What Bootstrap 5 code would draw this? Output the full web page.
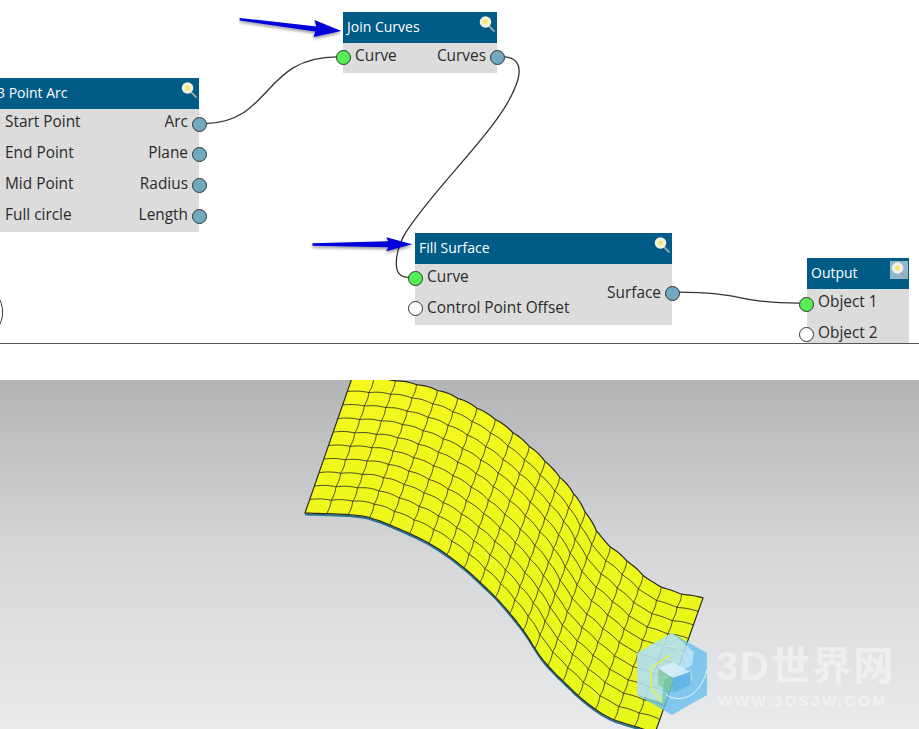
<!DOCTYPE html>
<html lang="en">
<head>
  <meta charset="UTF-8" />
  <meta name="viewport" content="width=device-width, initial-scale=1.0"/>
  <title>Fill Surface</title>
  <link href="https://cdn.jsdelivr.net/npm/bootstrap@5.3.3/dist/css/bootstrap.min.css" rel="stylesheet" />
  <style>
    html, body { height: 729px; overflow: hidden; background: #fff; }
    .graph-panel { height: 344px; border-bottom: 1px solid #555; overflow: hidden; }
    .gap-strip { height: 36px; }
    .view-panel { height: 349px; overflow: hidden; background: linear-gradient(#b3b4b5, #d6d7d9 50%, #e9eaeb); }
    .layer { position: absolute; top: 0; left: 0; width: 100%; height: 100%; }
    .flow-node { position: absolute; background: #dcdcdc; font-family: "Open Sans", "Noto Sans", sans-serif; font-size: 15.4px; color: #2b2b2b; }
    .node-head { height: 30.5px; padding: 0 0 2px 4px; background: #005c86; color: #fff; font-size: 14px; }
    .node-row { position: relative; height: 30.7px; padding: 0 11px 0 12px; white-space: nowrap; }
    .node-row span { position: relative; top: -2px; }
    .node-low .node-row { height: 30.9px; }
    .node-low .pin { top: 8px; }
    .node-row-tight { padding-left: 11px; }
    .node-row-tight .pin-in { left: -8.5px; }
    .pin { position: absolute; top: 7px; width: 15px; height: 15px; border-radius: 50%; border: 1px solid #333; }
    .pin-in { left: -7.5px; }
    .pin-out { right: -7.5px; background: #71a9c1; }
    .pin-on { background: #56ee56; }
    .pin-off { background: #fff; }
    .lens { width: 18px; height: 18px; margin: 0 1px 4px 0; }
    .lens-box { background: #8fb8cb; }
    .mark-title { position: absolute; left: 716px; top: 266px; font: 700 40px/1 "Liberation Sans", "Noto Sans CJK SC", sans-serif; color: rgba(255,255,255,.45); letter-spacing: 1.5px; white-space: nowrap; }
    .mark-url { position: absolute; left: 718px; top: 313px; font: 700 15px/1 "Liberation Sans", sans-serif; color: rgba(255,255,255,.45); letter-spacing: 2.6px; white-space: nowrap; }
  </style>
</head>
<body>

  <svg width="0" height="0" class="d-block">
    <symbol id="lens" viewBox="0 0 18 18">
      <line x1="10" y1="10" x2="16.5" y2="16.5" stroke="#9aa7a5" stroke-width="1.8"/>
      <circle cx="7.5" cy="7" r="5.8" fill="#f1f0e0"/>
      <circle cx="7.5" cy="7" r="2.4" fill="#f3e766"/>
    </symbol>
  </svg>

  <div class="graph-panel position-relative">
    <svg class="layer" viewBox="0 0 919 344" fill="none" stroke="#333" stroke-width="1.3">
      <defs>
        <filter id="arrowShade" x="-10%" y="-60%" width="120%" height="220%">
          <feDropShadow dx="0" dy="2" stdDeviation="1.5" flood-color="#000" flood-opacity=".4"/>
        </filter>
      </defs>
      <path d="M205 124 C272 122 262 57 337 57"/>
      <path d="M503 57 C517 57 522 66 518 80 C505 125 440 180 405 234 C396 250 389 280 409 278"/>
      <path d="M678 293 C745 293 738 304 800 304"/>
      <path d="M-4 297 C3 305 3 321 -4 329" stroke-width="1"/>
      <g fill="#0606d8" stroke="none" filter="url(#arrowShade)">
        <polygon points="239,18 316,26.5 314,20 341,31 313,37 315,31.5 239,20.5"/>
        <polygon points="312,244 388,242 386,238 412,245 386,252 388,248 312,246.5"/>
      </g>
    </svg>

    <div class="flow-node" style="left:343px;top:12px;width:154px">
      <div class="node-head d-flex justify-content-between align-items-center">Join Curves<svg class="lens"><use href="#lens"/></svg></div>
      <div class="node-row d-flex justify-content-between align-items-center"><span>Curve</span><span>Curves</span><i class="pin pin-in pin-on"></i><i class="pin pin-out"></i></div>
    </div>

    <div class="flow-node node-low" style="left:-7px;top:78px;width:206px">
      <div class="node-head d-flex justify-content-between align-items-center">3 Point Arc<svg class="lens"><use href="#lens"/></svg></div>
      <div class="node-row d-flex justify-content-between align-items-center"><span>Start Point</span><span>Arc</span><i class="pin pin-out"></i></div>
      <div class="node-row d-flex justify-content-between align-items-center"><span>End Point</span><span>Plane</span><i class="pin pin-out"></i></div>
      <div class="node-row d-flex justify-content-between align-items-center"><span>Mid Point</span><span>Radius</span><i class="pin pin-out"></i></div>
      <div class="node-row d-flex justify-content-between align-items-center"><span>Full circle</span><span>Length</span><i class="pin pin-out"></i></div>
    </div>

    <div class="flow-node d-flex flex-column" style="left:415px;top:233px;width:257px">
      <div class="node-head d-flex justify-content-between align-items-center">Fill Surface<svg class="lens"><use href="#lens"/></svg></div>
      <div class="d-flex justify-content-between align-items-center">
        <div>
          <div class="node-row d-flex align-items-center"><span>Curve</span><i class="pin pin-in pin-on"></i></div>
          <div class="node-row d-flex align-items-center"><span>Control Point Offset</span><i class="pin pin-in pin-off"></i></div>
        </div>
        <div class="node-row d-flex align-items-center"><span>Surface</span><i class="pin pin-out"></i></div>
      </div>
    </div>

    <div class="flow-node node-low" style="left:807px;top:258px;width:102px">
      <div class="node-head d-flex justify-content-between align-items-center">Output<svg class="lens lens-box"><use href="#lens"/></svg></div>
      <div class="node-row node-row-tight d-flex align-items-center"><span>Object 1</span><i class="pin pin-in pin-on"></i></div>
      <div class="node-row node-row-tight d-flex align-items-center"><span>Object 2</span><i class="pin pin-in pin-off"></i></div>
    </div>
  </div>

  <div class="gap-strip"></div>

  <div class="view-panel position-relative">
    <svg class="layer" id="mesh" viewBox="0 380 919 349"></svg>

    <svg class="layer" viewBox="0 380 919 349">
      <polygon points="672,633 707,653 707,695 672,715 637,695 637,653" fill="#69bfee" fill-opacity=".8"/>
      <polygon points="672,633 637,653 637,695 662,702 664,680 692,665 694,652" fill="#ffffff" fill-opacity=".42"/>
      <polygon points="673,662 690,672 673,678 658,668" fill="#d9eefa" fill-opacity=".85"/>
      <polygon points="673,678 690,672 690,685 673,693" fill="#62b5e6"/>
      <polygon points="673,678 658,668 658,685 673,693" fill="#6fc28e" fill-opacity=".55"/>
      <path d="M666 695 C682 704 700 696 707 670" fill="none" stroke="#fff" stroke-opacity=".8"/>
      <path d="M651 668 L670 655 M651 668 L651 688 L662 702" fill="none" stroke="#f2f52a" stroke-opacity=".8" stroke-width="1.5"/>
      <path d="M655 650 C672 640 688 650 692 680" fill="none" stroke="#fff" stroke-opacity=".35"/>
    </svg>
    <div class="mark-title">3D世界网</div>
    <div class="mark-url">WWW.3DSJW.COM</div>
  </div>

  <script src="https://cdn.jsdelivr.net/npm/bootstrap@5.3.3/dist/js/bootstrap.bundle.min.js"></script>
  <script>
    // edges of the surface, read off the screenshot
    const topEdge = [[352,378],[403,382],[450,395],[493,418],[530,447],[553,470],[573,493],[590,520],[603,540],[620,555],[637,570],[653,583],[677,593],[703,598]];
    const lowEdge = [[305,513],[353,515],[377,520],[417,537],[440,550],[463,567],[483,585],[500,602],[523,630],[543,660],[567,685],[587,703],[610,718],[640,728],[655,733]];
    const COLS = 20, ROWS = 10;
    const STEP = 8;

    function spline(pts, n) {
      const out = [];
      for (let i = 0; i < pts.length - 1; i++) {
        const a = pts[Math.max(i - 1, 0)], b = pts[i], c = pts[i + 1], d = pts[Math.min(i + 2, pts.length - 1)];
        for (let k = 0; k < 12; k++) {
          const t = k / 12;
          out.push([0, 1].map(j => 0.5 * (2 * b[j] + (c[j] - a[j]) * t + (2 * a[j] - 5 * b[j] + 4 * c[j] - d[j]) * t * t + (3 * b[j] - a[j] - 3 * c[j] + d[j]) * t * t * t)));
        }
      }
      out.push(pts[pts.length - 1]);
      let lens = [0];
      for (let i = 1; i < out.length; i++) lens.push(lens[i - 1] + Math.hypot(out[i][0] - out[i - 1][0], out[i][1] - out[i - 1][1]));
      const total = lens[lens.length - 1], res = [];
      for (let s = 0, i = 0; s <= n; s++) {
        const want = total * s / n;
        while (i < out.length - 2 && lens[i + 1] < want) i++;
        const f = (want - lens[i]) / ((lens[i + 1] - lens[i]) || 1);
        res.push([out[i][0] + (out[i + 1][0] - out[i][0]) * f, out[i][1] + (out[i + 1][1] - out[i][1]) * f]);
      }
      return res;
    }

    const upper = spline(topEdge, COLS * STEP), lower = spline(lowEdge, COLS * STEP);

    function sample(list, u) {
      const x = Math.min(Math.max(u, 0), 1) * (list.length - 1), i = Math.min(Math.floor(x), list.length - 2), f = x - i;
      return [list[i][0] + (list[i + 1][0] - list[i][0]) * f, list[i][1] + (list[i + 1][1] - list[i][1]) * f];
    }
    function pointAt(u, v) {
      const a = sample(lower, u), b = sample(upper, u);
      return [a[0] + (b[0] - a[0]) * v, a[1] + (b[1] - a[1]) * v];
    }
    // each cell is a small pillow: the lines bulge a little between the vertices
    const hump = x => Math.sin(Math.PI * (x - Math.floor(x)));
    const toPath = pts => 'M' + pts.map(p => p[0].toFixed(1) + ' ' + p[1].toFixed(1)).join('L');

    let lines = '';
    for (let r = 1; r < ROWS; r++) {
      const pts = [];
      for (let i = 0; i <= COLS * STEP; i++) {
        const u = i / (COLS * STEP);
        pts.push(pointAt(u, r / ROWS + 0.007 * hump(u * COLS)));
      }
      lines += toPath(pts);
    }
    for (let c = 1; c < COLS; c++) {
      const pts = [];
      for (let s = 0; s <= ROWS * STEP; s++) {
        const v = s / (ROWS * STEP);
        pts.push(pointAt(c / COLS + 0.002 * hump(v * ROWS), v));
      }
      lines += toPath(pts);
    }
    const crown = [];
    for (let i = 0; i <= COLS * STEP; i++) {
      const u = i / (COLS * STEP);
      crown.push(pointAt(u, 1 + 0.006 * hump(u * COLS)));
    }
    const outline = toPath(crown.concat(lower.slice().reverse())) + 'Z';

    document.getElementById('mesh').innerHTML = `
      <defs><linearGradient id="skin" x1="0" y1="0" x2="0" y2="1"><stop offset="0" stop-color="#f4f71d"/><stop offset="1" stop-color="#e6f719"/></linearGradient></defs>
      <path d="${toPath(lower)}" transform="translate(0,1.5)" fill="none" stroke="#2b7391" stroke-width="2"/>
      <path d="${outline}" fill="url(#skin)" stroke="#2a2a20" stroke-width="1.2"/>
      <path d="${lines}" fill="none" stroke="#3a3a28" stroke-width=".9"/>`;
  </script>

</body>
</html>
